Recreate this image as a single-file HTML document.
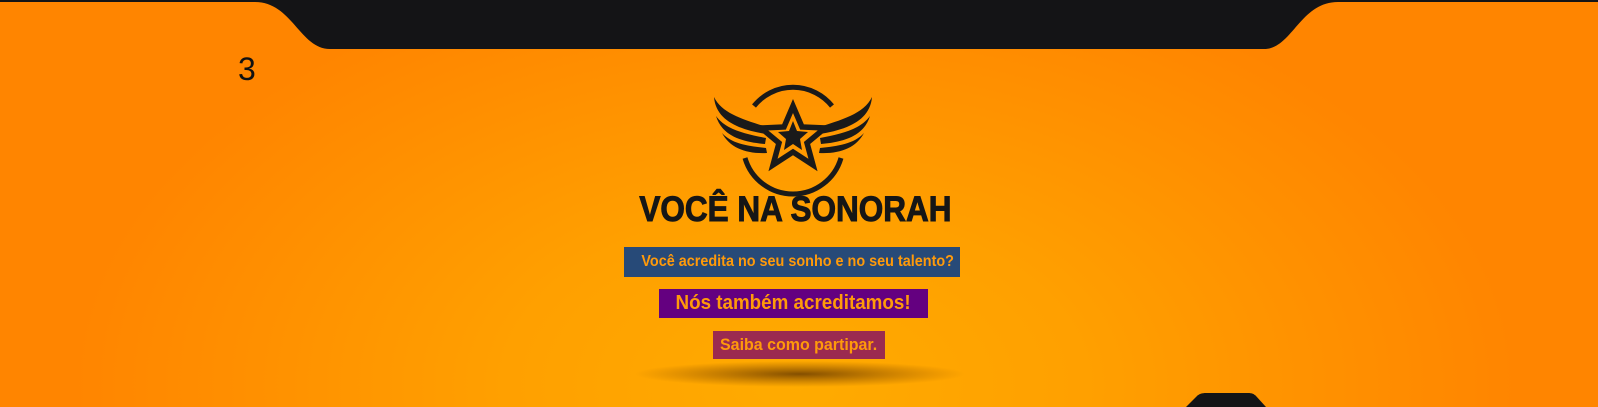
<!DOCTYPE html>
<html><head><meta charset="utf-8"><style>
html,body{margin:0;padding:0}
body{width:1598px;height:407px;overflow:hidden;position:relative;font-family:"Liberation Sans",sans-serif;
background:radial-gradient(ellipse 720px 430px at 795px 385px,#ffab00 0%,#ffa000 40%,#ff9000 75%,#ff8500 100%);}
.box{position:absolute;color:#ff9a0a;font-weight:bold;text-align:center;white-space:nowrap;}
.box span{display:inline-block;}
</style></head><body>
<svg width="1598" height="407" style="position:absolute;left:0;top:0">
<defs><radialGradient id="sh" cx="0.5" cy="0.5" r="0.5"><stop offset="0" stop-color="#5a3000" stop-opacity="0.75"/><stop offset="1" stop-color="#7a4000" stop-opacity="0"/></radialGradient></defs>
<path d="M0 0 H1598 V2 H1338 C1300 2 1292 49 1264 49 H330 C300 49 292 2 255 2 H0 Z" fill="#141416"/>
<path d="M1186 407 L1197 396 C1199 394 1202 393 1206 393 H1248 C1252 393 1254 394 1256 396 L1266 407 Z" fill="#141416"/>
<ellipse cx="800" cy="374" rx="165" ry="13" fill="url(#sh)"/>
<g fill="#1a1a1a" stroke="#1a1a1a">
<path d="M754 106 A50 50 0 0 1 832 106" fill="none" stroke-width="5"/>
<path d="M745 158 A50 50 0 0 0 841 158" fill="none" stroke-width="5"/>
<polygon points="793,106 802,127 825,128 807,143 813,165 793,152 773,165 779,143 761,128 784,127" fill="none" stroke-width="5.5" stroke-linejoin="miter"/>
<polygon points="793,121 797,131 808,132 800,139 802,150 793,144 784,150 786,139 778,132 789,131" stroke="none"/>
<path d="M714 97 C722 114 745 120 770 128 L766 134 C742 130 716 122 714 97 Z" stroke="none"/>
<path d="M716 116 C726 130 746 134 766 138 L765 144 C742 142 722 136 716 116 Z" stroke="none"/>
<path d="M722 133 C732 144 748 146 766 148 L767 153 C746 154 730 148 722 133 Z" stroke="none"/>
<path d="M872 97 C864 114 841 120 816 128 L820 134 C844 130 870 122 872 97 Z" stroke="none"/>
<path d="M870 116 C860 130 840 134 820 138 L821 144 C844 142 864 136 870 116 Z" stroke="none"/>
<path d="M864 133 C854 144 838 146 820 148 L819 153 C840 154 856 148 864 133 Z" stroke="none"/>
</g>
</svg>
<div style="position:absolute;left:238px;top:51px;font-size:32px;color:#111;">3</div>
<div style="position:absolute;left:595px;top:191px;width:400px;text-align:center;font-size:35px;line-height:38px;font-weight:bold;color:#161616;-webkit-text-stroke:1px #161616;"><span style="display:inline-block;transform:scaleX(0.9)">VOCÊ NA SONORAH</span></div>
<div class="box" style="left:624px;top:247px;width:336px;height:30px;line-height:29px;background:#274a78;font-size:16px;"><span style="transform:scaleX(0.9)">Você acredita no seu sonho e no seu talento?</span></div>
<div class="box" style="left:659px;top:289px;width:269px;height:29px;line-height:29px;background:#640080;font-size:20px;"><span style="transform:scaleX(0.94)">Nós também acreditamos!</span></div>
<div class="box" style="left:713px;top:331px;width:172px;height:28px;line-height:28px;background:#9b2a50;font-size:17px;"><span style="transform:scaleX(0.94)">Saiba como partipar.</span></div>
</body></html>
